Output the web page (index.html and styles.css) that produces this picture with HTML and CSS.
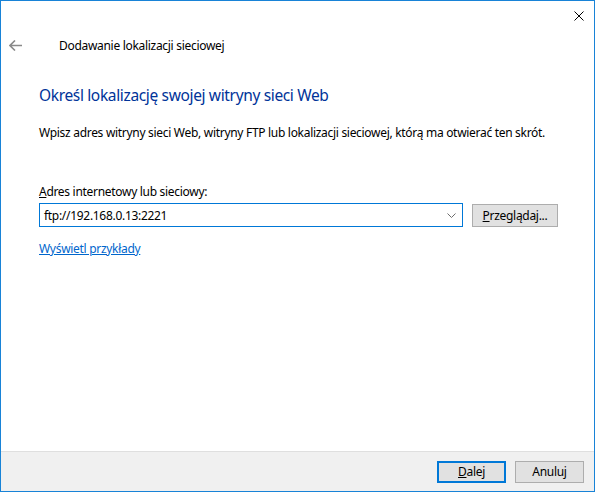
FILE: index.html
```html
<!DOCTYPE html>
<html lang="pl">
<head>
<meta charset="utf-8">
<title>Dodawanie lokalizacji sieciowej</title>
<link rel="stylesheet" href="styles.css">
</head>
<body>
<div class="window">
  <div class="titlebar">
    <button class="close" aria-label="Zamknij">
      <svg width="10" height="10" viewBox="0 0 10 10"><path d="M0.5 0.5 L9.5 9.5 M9.5 0.5 L0.5 9.5" stroke="#000" stroke-width="1" fill="none"/></svg>
    </button>
  </div>
  <div class="nav">
    <span class="back">
      <svg width="13" height="11" viewBox="0 0 13 11"><path d="M6 0.5 L1 5.5 L6 10.5 M1 5.5 H13" stroke="#8a8a8a" stroke-width="1.6" fill="none"/></svg>
    </span>
    <span class="wiz-title">Dodawanie lokalizacji sieciowej</span>
  </div>
  <div class="content">
    <h1 class="heading">Określ lokalizację swojej witryny sieci Web</h1>
    <p class="desc">Wpisz adres witryny sieci Web, witryny FTP lub lokalizacji sieciowej, którą ma otwierać ten skrót.</p>
    <label class="label"><u>A</u>dres internetowy lub sieciowy:</label>
    <div class="row">
      <div class="combo">
        <span class="combo-text">ftp://192.168.0.13:2221</span>
        <svg class="chev" width="9" height="5" viewBox="0 0 9 5"><path d="M0.5 0.5 L4.5 4.5 L8.5 0.5" stroke="#6d6d6d" stroke-width="1" fill="none"/></svg>
      </div>
      <button class="btn browse"><u>P</u>rzeglądaj...</button>
    </div>
    <a class="link" href="#">Wyświetl przykłady</a>
  </div>
  <div class="footer">
    <button class="btn primary"><u>D</u>alej</button>
    <button class="btn">Anuluj</button>
  </div>
</div>
</body>
</html>
```

FILE: styles.css
```css
* { box-sizing: border-box; }
html, body { margin: 0; padding: 0; background: #fff; }
body {
  font-family: "Noto Sans", "Liberation Sans", sans-serif;
  font-size: 12px;
  letter-spacing: -0.3px;
  color: #000;
}
.window {
  width: 595px;
  height: 492px;
  border: 1px solid #1883d7;
  display: flex;
  flex-direction: column;
  background: #fff;
}
.titlebar {
  height: 30px;
  display: flex;
  justify-content: flex-end;
}
.close {
  width: 30px;
  height: 29px;
  border: 0;
  background: transparent;
  padding: 0;
  display: flex;
  align-items: center;
  justify-content: center;
}
.nav {
  display: flex;
  align-items: center;
  height: 28px;
  padding-left: 8px;
}
.back { display: flex; width: 50px; }
.wiz-title { font-size: 12px; }
.content {
  padding-left: 38px;
  padding-right: 20px;
  flex: 1;
}
.heading {
  margin: 25px 0 0 0;
  font-size: 15.5px;
  letter-spacing: -0.35px;
  font-weight: normal;
  color: #003399;
  line-height: 22px;
}
.desc {
  margin: 19px 0 0 0;
  line-height: 16px;
  white-space: nowrap;
}
.label {
  display: block;
  margin-top: 43px;
  line-height: 16px;
}
.row {
  display: flex;
  align-items: center;
  gap: 9px;
  margin-top: 3px;
}
.combo {
  width: 424px;
  height: 24px;
  border: 1px solid #0078d7;
  display: flex;
  align-items: center;
  justify-content: space-between;
  padding: 0 6px 0 4px;
}
.btn {
  font-family: inherit;
  font-size: 12px;
  letter-spacing: -0.3px;
  color: #000;
  background: #e1e1e1;
  border: 1px solid #adadad;
  padding: 0;
  height: 23px;
}
.browse { width: 86px; }
.link {
  display: inline-block;
  margin-top: 14px;
  color: #0066cc;
  text-decoration: underline;
  line-height: 16px;
}
.footer {
  height: 40px;
  background: #f0f0f0;
  border-top: 1px solid #dfdfdf;
  display: flex;
  justify-content: flex-end;
  align-items: center;
  gap: 9px;
  padding-right: 10px;
}
.footer .btn { width: 69px; height: 22px; }
.primary { border: 2px solid #0078d7; }
```
